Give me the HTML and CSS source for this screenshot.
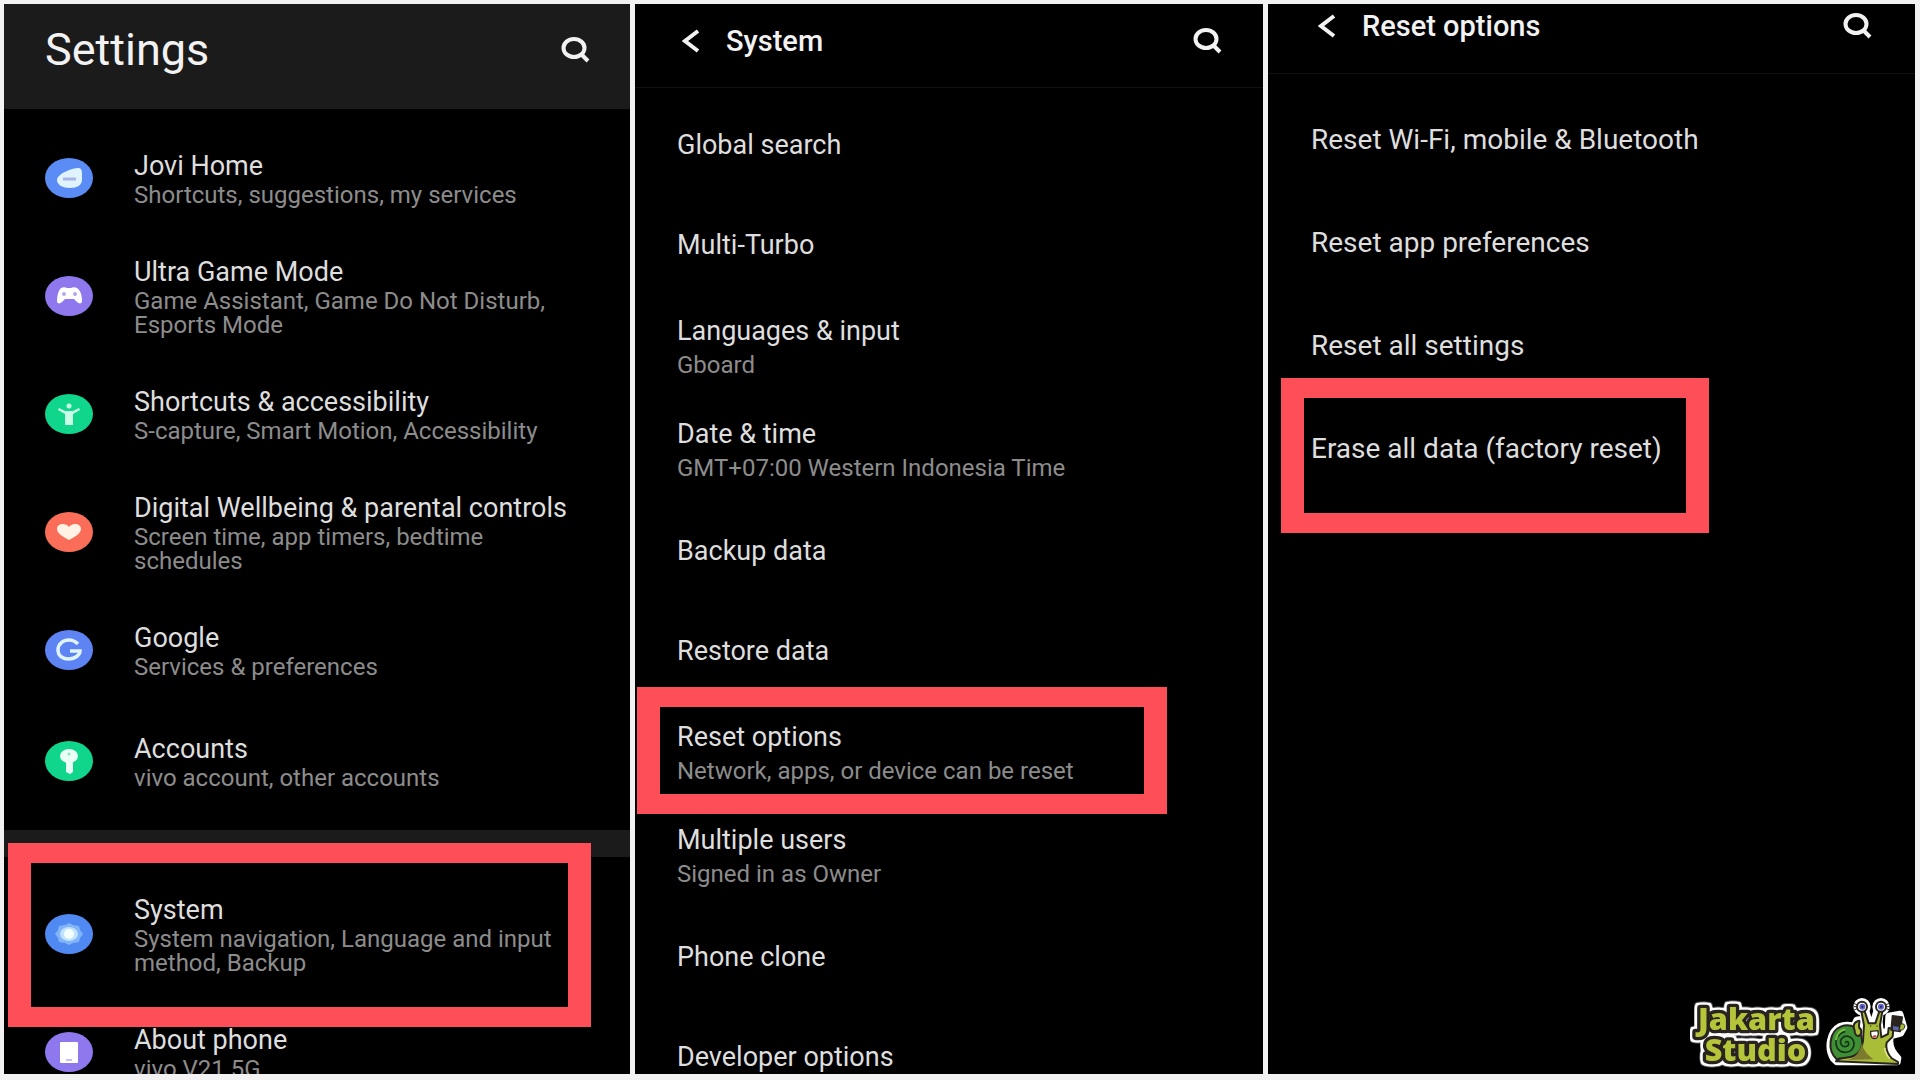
FILE: index.html
```html
<!DOCTYPE html>
<html lang="en">
<head>
  <meta charset="UTF-8" />
  <meta name="viewport" content="width=device-width, initial-scale=1.0"/>
  <title>Factory reset steps</title>
  <link rel="stylesheet" href="styles.css">
</head>
<body>
  <main class="steps">
    <!-- Step 1: settings -->
    <section class="screen">
      <header class="bar bar-main">
        <h1 class="main-title">Settings</h1>
        <button class="icon-btn" aria-label="Search">
          <svg width="29" height="26" viewBox="0 0 29 26"><ellipse cx="13" cy="11" rx="10.5" ry="9" /><path d="M20 17l7 7" /></svg>
        </button>
      </header>

      <ul class="group group-first">
        <li>
          <a class="row" href="#jovi">
            <svg class="badge" viewBox="0 0 48 40"><ellipse cx="24" cy="20" rx="24" ry="20" fill="#5b8cf5"/><path d="M12 22c0-5 11-11 21-12 3 0 4 2 4 6v6c0 5-5 8-12 8s-13-3-13-8z" fill="#dff4ff"/><path d="M18 21h13" stroke="#a9b5e6" stroke-width="3"/></svg>
            <span class="text"><span class="title">Jovi Home</span><span class="sub">Shortcuts, suggestions, my services</span></span>
          </a>
        </li>
        <li>
          <a class="row" href="#game">
            <svg class="badge" viewBox="0 0 48 40"><ellipse cx="24" cy="20" rx="24" ry="20" fill="#8f78ee"/><path d="M12 25c0-5 1-10 4-13 2-1 4-1 6 0h4c2-1 4-1 6 0 4 3 5 8 5 13 0 3-3 3-5 1l-3-3h-9l-3 3c-2 2-5 2-5-1z" fill="#fff"/><circle cx="19" cy="18" r="2" fill="#b5a8ef"/><circle cx="30" cy="18" r="2" fill="#b5a8ef"/></svg>
            <span class="text"><span class="title">Ultra Game Mode</span><span class="sub">Game Assistant, Game Do Not Disturb,<br>Esports Mode</span></span>
          </a>
        </li>
        <li>
          <a class="row" href="#accessibility">
            <svg class="badge" viewBox="0 0 48 40"><ellipse cx="24" cy="20" rx="24" ry="20" fill="#10d68c"/><circle cx="24" cy="12" r="2.5" fill="#c9ffe6"/><path d="M14 14l6 3h8l6-3 1 2-7 4v11h-8V20l-7-4z" fill="#c9ffe6"/></svg>
            <span class="text"><span class="title">Shortcuts &amp; accessibility</span><span class="sub">S-capture, Smart Motion, Accessibility</span></span>
          </a>
        </li>
        <li>
          <a class="row" href="#wellbeing">
            <svg class="badge" viewBox="0 0 48 40"><ellipse cx="24" cy="20" rx="24" ry="20" fill="#fa6e59"/><path d="M24 28c-6-3-12-7-12-11 0-5 8-7 12-2 4-5 12-3 12 2 0 4-6 8-12 11z" fill="#fff3e6"/></svg>
            <span class="text"><span class="title">Digital Wellbeing &amp; parental controls</span><span class="sub">Screen time, app timers, bedtime<br>schedules</span></span>
          </a>
        </li>
        <li>
          <a class="row" href="#google">
            <svg class="badge" viewBox="0 0 48 40"><ellipse cx="24" cy="20" rx="24" ry="20" fill="#5e84f4"/><path d="M33 14c-2-2-5-4-9-4-6 0-11 4-11 10s5 9 11 9 11-4 11-8H25" fill="none" stroke="#dff4ff" stroke-width="3.5"/></svg>
            <span class="text"><span class="title">Google</span><span class="sub">Services &amp; preferences</span></span>
          </a>
        </li>
      </ul>

      <ul class="group group-accounts">
        <li>
          <a class="row" href="#accounts">
            <svg class="badge" viewBox="0 0 48 40"><ellipse cx="24" cy="20" rx="24" ry="20" fill="#10d68c"/><ellipse cx="24" cy="15" rx="9" ry="7" fill="#eafff5"/><path d="M21 19h7v12l-3 2-4-2z" fill="#eafff5"/><circle cx="24" cy="13" r="1.5" fill="#8de6c0"/></svg>
            <span class="text"><span class="title">Accounts</span><span class="sub">vivo account, other accounts</span></span>
          </a>
        </li>
      </ul>

      <ul class="group group-system">
        <li>
          <a class="row marked mark-system" href="#system">
            <svg class="badge" viewBox="0 0 48 40"><ellipse cx="24" cy="20" rx="24" ry="20" fill="#5189f2"/><path d="M24 9l4 2 6 1 1 4 3 4-3 4-1 4-6 1-4 2-4-2-6-1-1-4-3-4 3-4 1-4 6-1z" fill="#82b4fa"/><ellipse cx="24" cy="20" rx="9" ry="7" fill="#bfe2ff"/><ellipse cx="24" cy="20" rx="5" ry="5" fill="#f4ffff"/></svg>
            <span class="text"><span class="title">System</span><span class="sub">System navigation, Language and input<br>method, Backup</span></span>
          </a>
        </li>
        <li>
          <a class="row" href="#about">
            <svg class="badge" viewBox="0 0 48 40"><ellipse cx="24" cy="20" rx="24" ry="20" fill="#8f78ee"/><rect x="15" y="10" width="18" height="21" rx="1" fill="#fff"/><path d="M21 28h6" stroke="#b5a8ef" stroke-width="1.5"/></svg>
            <span class="text"><span class="title">About phone</span><span class="sub">vivo V21 5G</span></span>
          </a>
        </li>
      </ul>
    </section>

    <!-- Step 2: system -->
    <section class="screen">
      <header class="bar bar-sub">
        <button class="icon-btn" aria-label="Back">
          <svg width="18" height="24" viewBox="0 0 18 24"><path d="M16 2L3 12l13 10" /></svg>
        </button>
        <h2 class="sub-title">System</h2>
        <button class="icon-btn" aria-label="Search">
          <svg width="29" height="26" viewBox="0 0 29 26"><ellipse cx="13" cy="11" rx="10.5" ry="9" /><path d="M20 17l7 7" /></svg>
        </button>
      </header>
      <ul class="options">
        <li><a class="option" href="#search"><span class="title">Global search</span></a></li>
        <li><a class="option" href="#turbo"><span class="title">Multi-Turbo</span></a></li>
        <li><a class="option option-double" href="#languages"><span class="title">Languages &amp; input</span><span class="sub">Gboard</span></a></li>
        <li><a class="option option-double" href="#date"><span class="title">Date &amp; time</span><span class="sub">GMT+07:00 Western Indonesia Time</span></a></li>
        <li><a class="option" href="#backup"><span class="title">Backup data</span></a></li>
        <li><a class="option" href="#restore"><span class="title">Restore data</span></a></li>
        <li><a class="option option-double marked mark-reset" href="#reset"><span class="title">Reset options</span><span class="sub">Network, apps, or device can be reset</span></a></li>
        <li><a class="option option-double" href="#users"><span class="title">Multiple users</span><span class="sub">Signed in as Owner</span></a></li>
        <li><a class="option" href="#clone"><span class="title">Phone clone</span></a></li>
        <li><a class="option" href="#developer"><span class="title">Developer options</span></a></li>
      </ul>
    </section>

    <!-- Step 3: reset options -->
    <section class="screen screen-reset">
      <header class="bar bar-sub">
        <button class="icon-btn" aria-label="Back">
          <svg width="18" height="24" viewBox="0 0 18 24"><path d="M16 2L3 12l13 10" /></svg>
        </button>
        <h2 class="sub-title">Reset options</h2>
        <button class="icon-btn" aria-label="Search">
          <svg width="29" height="26" viewBox="0 0 29 26"><ellipse cx="13" cy="11" rx="10.5" ry="9" /><path d="M20 17l7 7" /></svg>
        </button>
      </header>
      <ul class="options">
        <li><a class="option" href="#wifi"><span class="title">Reset Wi-Fi, mobile &amp; Bluetooth</span></a></li>
        <li><a class="option" href="#apps"><span class="title">Reset app preferences</span></a></li>
        <li><a class="option" href="#all"><span class="title">Reset all settings</span></a></li>
        <li><a class="option marked mark-erase" href="#erase"><span class="title">Erase all data (factory reset)</span></a></li>
      </ul>

      <svg class="logo" viewBox="60 45 660 225" role="img" aria-label="Jakarta Studio">
        <g class="logo-text">
          <text x="84" y="149">Jakarta</text>
          <text x="104" y="243">Studio</text>
        </g>
        <!-- snail: white sticker edge first, then the parts -->
        <g fill="#fff" stroke="#fff" stroke-width="20" stroke-linejoin="round">
          <path d="M490 236c-20-32-10-82 18-96 18-8 34-4 44-2l8-18 22-4-6-30h10l10 34h16l10-34h10l-4 40 4 34 22-8 2-44 34-6 12 40-10 18-30 8c-6 22 2 46 22 66l-2 12H500z"/>
          <circle cx="576" cy="80" r="16"/><circle cx="633" cy="80" r="16"/>
        </g>
        <g stroke="#2a2420" stroke-width="6" stroke-linejoin="round">
          <path d="M498 244c14-12 40-18 62-30 18-10 20-28 20-50l2-28-8-42h10l12 36h20l12-36h9l-7 42 4 36 20-10 2-18 14 2-2 24-18 18c-4 18 4 34 14 46l20 12v6z" fill="#a9bd37"/>
          <path d="M500 238c-30-28-22-84 12-98 32-12 62 6 64 42 2 22-6 36-22 44-18 10-40 6-54 12z" fill="#3f8f35"/>
          <path d="M554 152c-8-16 0-28 14-30 2 8-4 14 0 22 8 4 8 20-2 24-8 0-12-8-12-16z" fill="#a9bd37"/>
          <circle cx="576" cy="80" r="15" fill="#fff"/>
          <circle cx="633" cy="80" r="15" fill="#fff"/>
          <path d="M668 108l28 4-6 42-26-4z" fill="#2a2420"/>
        </g>
        <path d="M527 190c-2-6 8-8 9 0 1 10-15 14-22 4-8-14 6-28 20-25 18 4 22 24 14 36-10 16-36 16-46-1-10-20 0-44 24-50" fill="none" stroke="#15351a" stroke-width="5"/>
        <path d="M498 180c2-18 12-28 28-32" fill="none" stroke="#74bd3d" stroke-width="6"/>
        <path d="M576 186c2 24 16 38 34 52l-76 2c22-6 38-26 42-54z" fill="#7c7b2d"/>
        <circle cx="577" cy="80" r="9" fill="#5d63c7"/><circle cx="633" cy="80" r="9" fill="#5d63c7"/>
        <circle cx="577" cy="80" r="3" fill="#22204e"/><circle cx="633" cy="80" r="3" fill="#22204e"/>
        <path d="M551 70l10 4m-10 6h9m-8 10l10-4m96-16l-10 4m12 6h-10m9 10l-10-4" stroke="#2a2420" stroke-width="3"/>
        <circle cx="602" cy="138" r="2" fill="#2a2420"/><circle cx="621" cy="138" r="2" fill="#2a2420"/>
        <path d="M602 154l22-2c3 14-2 24-11 24-8 0-12-8-11-22z" fill="#fff" stroke="#2a2420" stroke-width="4"/>
        <path d="M606 170c6-5 10-5 14-3-2 7-10 9-14 3z" fill="#c9473f"/>
        <path d="M669 138l18 3-2 11-16-3z" fill="#5d63a7"/>
        <path d="M693 132c8-2 13 2 11 9s-8 11-15 9" fill="#a9bd37" stroke="#2a2420" stroke-width="3"/>
        <path d="M644 204c2 14 6 24 16 32" fill="none" stroke="#dfe58a" stroke-width="5"/>
      </svg>
    </section>
  </main>
</body>
</html>
```
FILE: styles.css
```css
* {
  box-sizing: border-box;
}
body {
  margin: 0;
  background: #f2f2f2;
  color: #dedede;
  font-family: Roboto, "Liberation Sans", sans-serif;
}
.steps {
  display: grid;
  grid-template-columns: 626fr 628fr 647fr;
  gap: 5px;
  height: 100vh;
  padding: 4px 5px 6px 4px;
}
.screen {
  position: relative;
  overflow: hidden;
  background: #000;
}
ul {
  list-style: none;
  margin: 0;
  padding: 0;
}
a {
  color: inherit;
  text-decoration: none;
}

/* top bars */
.bar {
  display: flex;
  align-items: center;
}
.bar-main {
  justify-content: space-between;
  padding: 22px 40px 35px 41px;
  background: #1b1b1b;
}
.main-title {
  margin: 0;
  font-size: 45px;
  font-weight: 400;
  line-height: 48px;
  color: #f2f2f2;
}
.bar-sub {
  gap: 26px;
  padding: 20px 41px 29px 47px;
  border-bottom: 1px solid #101010;
}
.screen-reset .bar-sub {
  padding: 5px 43px 30px 50px;
}
.sub-title {
  flex: 1;
  margin: 0;
  font-size: 29px;
  font-weight: 500;
  line-height: 34px;
  color: #f2f2f2;
}
.icon-btn {
  display: flex;
  padding: 0;
  border: none;
  background: none;
  cursor: pointer;
}
.icon-btn svg {
  fill: none;
  stroke: #f2f2f2;
  stroke-width: 4;
}

/* rows */
.title {
  display: block;
  font-size: 27px;
  line-height: 34px;
}
.sub {
  display: block;
  font-size: 24px;
  line-height: 24px;
  color: #8c8c8c;
}
.group-first {
  padding-top: 16px;
}
.group-accounts {
  padding: 5px 0 16px;
}
.group-system {
  padding-top: 12px;
  border-top: 27px solid #1b1b1b;
}
.row {
  display: flex;
  align-items: center;
  gap: 41px;
  padding: 24px 20px 24px 41px;
  white-space: nowrap;
}
.badge {
  flex: none;
  width: 48px;
  height: 40px;
}
.options {
  padding-top: 7px;
}
.option {
  display: flex;
  flex-direction: column;
  justify-content: center;
  min-height: 100px;
  padding: 0 42px;
  white-space: nowrap;
}
.option-double {
  gap: 5px;
  padding: 19px 42px 21px;
}
.screen-reset .options {
  padding-top: 14px;
}
.screen-reset .option {
  min-height: 103px;
  padding: 0 43px;
}
.screen-reset .title {
  font-size: 28px;
}

/* red frames */
.marked {
  position: relative;
}
.marked::after {
  content: "";
  position: absolute;
  border: 20px solid #fe4f58;
  border-width: 20px 23px;
}
.mark-system::after {
  inset: -26px 39px -28px 4px;
}
.mark-reset::after {
  inset: -14px 96px -10px 2px;
}
.mark-erase::after {
  inset: -19px 206px -33px 13px;
}

.logo {
  position: absolute;
  right: 5px;
  bottom: 4px;
  width: 220px;
  height: 75px;
}
.logo-text {
  fill: #b6c43a;
  stroke: #2a2420;
  stroke-width: 20px;
  stroke-linejoin: round;
  paint-order: stroke;
  font-family: "Noto Sans", sans-serif;
  font-size: 92px;
  font-weight: 900;
  filter: drop-shadow(7px 0 0 #fff) drop-shadow(-7px 0 0 #fff) drop-shadow(0 7px 0 #fff) drop-shadow(0 -7px 0 #fff);
}
```
